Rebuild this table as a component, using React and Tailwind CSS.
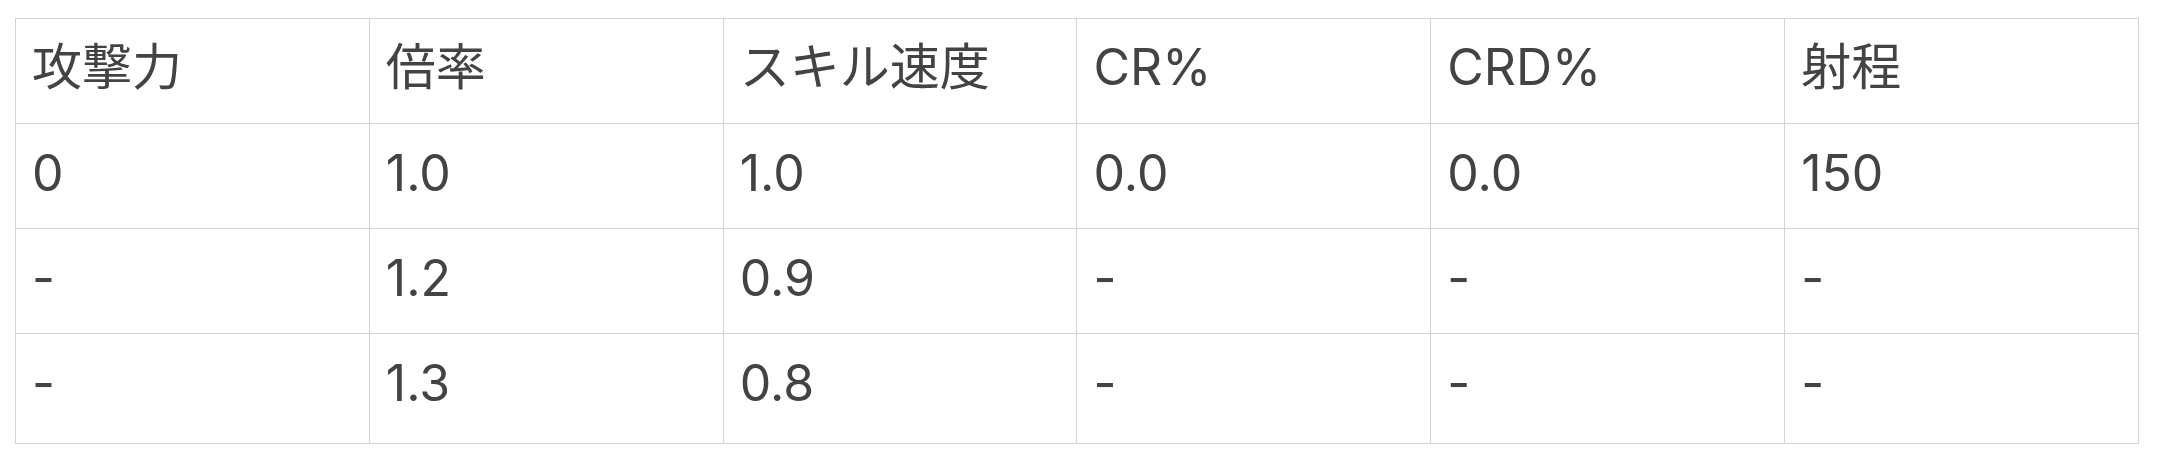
import React from 'react'

const headers = ['攻撃力', '倍率', 'スキル速度', 'CR%', 'CRD%', '射程']

const rows = [
  ['0', '1.0', '1.0', '0.0', '0.0', '150'],
  ['-', '1.2', '0.9', '-', '-', '-'],
  ['-', '1.3', '0.8', '-', '-', '-'],
]

export default function App() {
  return (
    <div className="min-h-screen bg-white pl-[15px] pt-[18px]" style={{ fontFamily: 'Inter, "Noto Sans CJK JP", sans-serif' }}>
      <table className="w-[2124px] table-fixed border-collapse text-[50px] leading-none text-[#434343]">
        <thead>
          <tr>
            {headers.map((h) => (
              <th key={h} className="h-[105px] border border-[#d3d3d3] px-[16px] pb-[8px] text-left align-middle font-normal">
                {h}
              </th>
            ))}
          </tr>
        </thead>
        <tbody>
          {rows.map((r, i) => (
            <tr key={i}>
              {r.map((c, j) => (
                <td
                  key={j}
                  className={
                    i === rows.length - 1
                      ? 'h-[110px] border border-[#d3d3d3] px-[16px] pb-[12px] align-middle'
                      : 'h-[105px] border border-[#d3d3d3] px-[16px] pb-[6px] align-middle'
                  }
                >
                  {c}
                </td>
              ))}
            </tr>
          ))}
        </tbody>
      </table>
    </div>
  )
}
